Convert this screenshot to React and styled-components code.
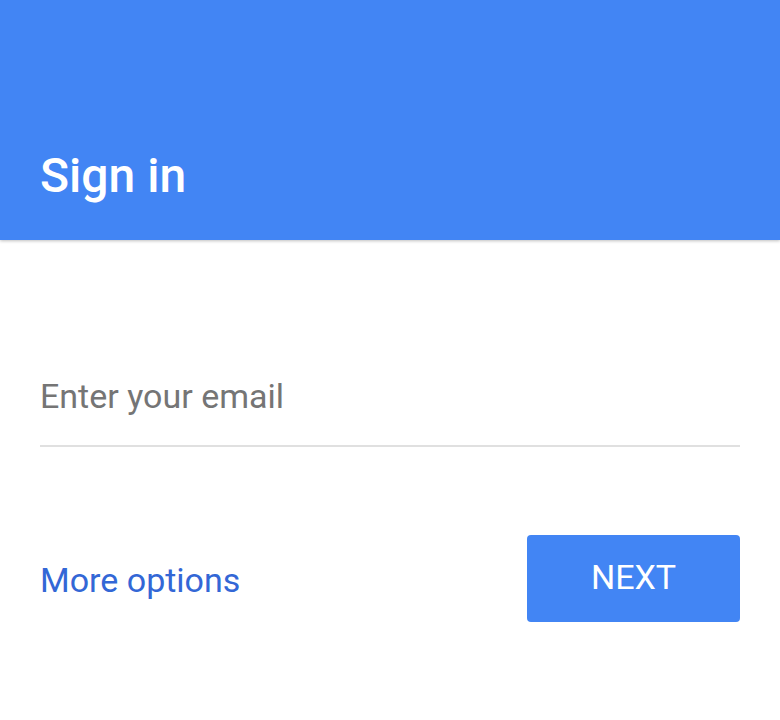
import styled, { createGlobalStyle } from "styled-components";

const GlobalStyle = createGlobalStyle`
  html, body {
    margin: 0;
    padding: 0;
    background: #ffffff;
    font-family: Roboto, "Noto Sans", sans-serif;
  }
`;

const Page = styled.div`
  width: 780px;
  height: 720px;
  display: flex;
  flex-direction: column;
  background: #ffffff;
`;

const Header = styled.header`
  height: 240px;
  flex-shrink: 0;
  background: #4285f4;
  box-shadow: 0 1px 3px rgba(0, 0, 0, 0.25);
  display: flex;
  align-items: flex-end;
  padding: 0 40px 40px;
  box-sizing: border-box;
`;

const Title = styled.h1`
  margin: 0;
  color: #ffffff;
  font-size: 48px;
  font-weight: 500;
  line-height: 1;
`;

const Body = styled.div`
  padding: 136px 40px 0;
  display: flex;
  flex-direction: column;
`;

const EmailInput = styled.input`
  border: none;
  border-bottom: 2px solid #e0e0e0;
  outline: none;
  padding: 0 0 29px;
  font-family: inherit;
  font-size: 34px;
  color: #212121;
  background: transparent;

  &::placeholder {
    color: #757575;
  }
`;

const Actions = styled.div`
  margin-top: 88px;
  display: flex;
  align-items: center;
  justify-content: space-between;
`;

const LinkText = styled.a`
  color: #3367d6;
  font-size: 34px;
  text-decoration: none;
  margin-top: 2px;
`;

const Button = styled.button`
  width: 213px;
  height: 87px;
  border: none;
  border-radius: 4px;
  background: #4285f4;
  color: #ffffff;
  font-family: inherit;
  font-size: 34px;
  padding: 0 0 4px;
  cursor: pointer;
`;

const App = () => {
  return (
    <Page>
      <GlobalStyle />
      <Header>
        <Title>Sign in</Title>
      </Header>
      <Body>
        <EmailInput placeholder="Enter your email" />
        <Actions>
          <LinkText href="#">More options</LinkText>
          <Button>NEXT</Button>
        </Actions>
      </Body>
    </Page>
  );
};

export default App;
